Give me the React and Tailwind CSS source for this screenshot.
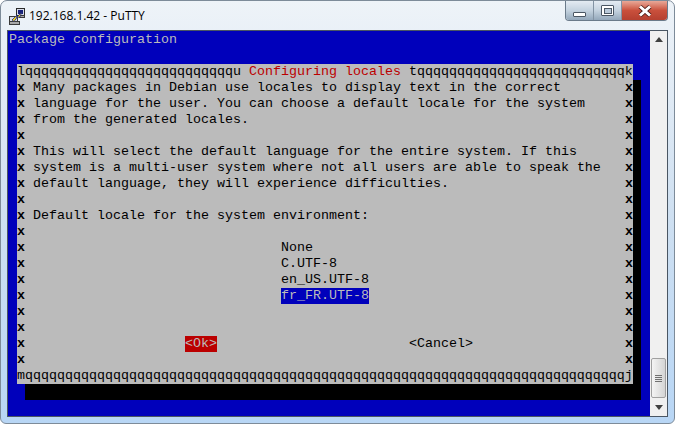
// App.jsx
// PuTTY window (Windows 7 frame) showing the Debian "Configuring locales" dialog.

const mono = "font-['Liberation_Mono','Courier_New',monospace] text-[13.33px] leading-[16px] whitespace-pre";

const bodyRows = [
  'Many packages in Debian use locales to display text in the correct',
  'language for the user. You can choose a default locale for the system',
  'from the generated locales.',
  '',
  'This will select the default language for the entire system. If this',
  'system is a multi-user system where not all users are able to speak the',
  'default language, they will experience difficulties.',
  '',
  'Default locale for the system environment:',
  '',
];

const locales = ['None', 'C.UTF-8', 'en_US.UTF-8', 'fr_FR.UTF-8'];

// one dialog line: the x border, the content, the x border
function Row({ children }) {
  return (
    <div className="flex h-4 w-[616px] justify-between">
      <div className="flex">
        <span className="w-4 font-bold">x</span>
        {children}
      </div>
      <span className="font-bold">x</span>
    </div>
  );
}

function PuttyIcon() {
  return (
    <svg width="17" height="17" viewBox="0 0 17 17" className="shrink-0">
      {/* lower computer */}
      <rect x="0.5" y="8.5" width="8" height="5" fill="#d8dce8" stroke="#3a3a3a" />
      <rect x="0.5" y="13.5" width="10" height="3" fill="#a8a8a8" stroke="#3a3a3a" />
      {/* upper computer */}
      <rect x="7.5" y="0.5" width="8" height="7" fill="#d8dce8" stroke="#2a2a2a" />
      <rect x="9" y="2" width="5" height="4" fill="#16207a" />
      <rect x="10.5" y="7.5" width="5" height="2" fill="#a8a8a8" stroke="#3a3a3a" />
      {/* lightning between them */}
      <path d="M3 12 L8 7 L7.5 9.5 L12.5 4.5 L11 9 L8 9.5 L5 13.5 Z" fill="#f7d81e" stroke="#1c2a80" strokeWidth="0.8" />
    </svg>
  );
}

function WindowButtons() {
  return (
    <div className="mr-[6px] flex h-[20px] w-[103px] overflow-hidden rounded-b-[4px] border border-t-0 border-[#6a7a8a]">
      <div className="flex w-[28px] items-end justify-center border-r border-[#8393a3] bg-gradient-to-b from-[#e4ebf2] via-[#c4d2df] to-[#94a8bb] pb-[3px]">
        <div className="h-[5px] w-[13px] rounded-[1px] border border-[#4a5663] bg-white" />
      </div>
      <div className="flex w-[28px] items-center justify-center border-r border-[#8393a3] bg-gradient-to-b from-[#e4ebf2] via-[#c4d2df] to-[#94a8bb]">
        <div className="flex h-[11px] w-[13px] items-center justify-center rounded-[1px] border border-[#4a5663] bg-white">
          <div className="h-[6px] w-[8px] border border-[#4a5663] bg-[#b9c9d9]" />
        </div>
      </div>
      <div className="flex flex-1 items-center justify-center bg-gradient-to-b from-[#e8a898] via-[#c9503c] to-[#b54030]">
        <svg width="16" height="12" viewBox="0 0 16 12">
          <path d="M3 1.5 L13 10.5 M13 1.5 L3 10.5" stroke="#4a1a14" strokeWidth="4.4" />
          <path d="M3 1.5 L13 10.5 M13 1.5 L3 10.5" stroke="#ffffff" strokeWidth="3" />
        </svg>
      </div>
    </div>
  );
}

function Scrollbar() {
  return (
    <div className="flex w-[17px] shrink-0 flex-col items-center bg-[#f0f0f0]">
      <div className="flex h-[17px] w-full items-center justify-center">
        <svg width="8" height="5" viewBox="0 0 8 5"><path d="M4 0 L8 5 H0 Z" fill="#404040" /></svg>
      </div>
      <div className="flex-1" />
      <div className="flex h-[40px] w-[15px] flex-col items-center justify-center gap-[1px] rounded-[2px] border border-[#a0a0a0] bg-gradient-to-r from-[#f4f4f4] to-[#d4d4d4]">
        <div className="h-px w-[7px] bg-[#707070]" />
        <div className="h-px w-[7px] bg-[#707070]" />
        <div className="h-px w-[7px] bg-[#707070]" />
        <div className="h-px w-[7px] bg-[#707070]" />
      </div>
      <div className="flex h-[18px] w-full items-center justify-center">
        <svg width="8" height="5" viewBox="0 0 8 5"><path d="M0 0 H8 L4 5 Z" fill="#404040" /></svg>
      </div>
    </div>
  );
}

function Dialog() {
  return (
    <div className="ml-2 w-[616px] bg-[#bbbbbb] text-[#000000] shadow-[8px_16px_0_#000000]">
      {/* ---- top border with the title ---- */}
      <div className="flex h-4">
        <span>{'l' + 'q'.repeat(26) + 'u '}</span>
        <span className="text-[#bb0000]">Configuring locales</span>
        <span>{' t' + 'q'.repeat(26) + 'k'}</span>
      </div>

      {bodyRows.map((text, i) => (
        <Row key={i}>
          <span>{text}</span>
        </Row>
      ))}

      {/* ---- locale list ---- */}
      {locales.map((name) => (
        <Row key={name}>
          <span
            className={
              name === 'fr_FR.UTF-8'
                ? 'ml-[248px] bg-[#0000bb] text-[#bbbbbb]'
                : 'ml-[248px]'
            }
          >
            {name}
          </span>
        </Row>
      ))}

      <Row />
      <Row />

      {/* ---- buttons ---- */}
      <Row>
        <span className="ml-[152px] bg-[#bb0000] text-[#bbbbbb]">{'<Ok>'}</span>
        <span className="ml-[192px]">{'<Cancel>'}</span>
      </Row>

      <Row />

      <div className="h-4">{'m' + 'q'.repeat(75) + 'j'}</div>
    </div>
  );
}

export default function App() {
  return (
    <div className="h-[424px] w-[675px] overflow-hidden bg-white">
      <div className="flex h-[424px] flex-col rounded-t-[7px] rounded-b-[6px] border border-[#7d8b99] bg-gradient-to-b from-[#eef3f8] via-[#cfe0f1] to-[#b8d6f5] px-[6px] pb-[6px]">

        {/* ---- title bar ---- */}
        <div className="flex h-[29px] shrink-0 items-start justify-between">
          <div className="mt-[6px] flex items-center gap-[3px] pl-[2px]">
            <PuttyIcon />
            <span className="font-['Open_Sans',sans-serif] text-[12px] leading-[18px] text-[#000000]">
              192.168.1.42 - PuTTY
            </span>
          </div>
          <div className="-mr-[6px]">
            <WindowButtons />
          </div>
        </div>

        {/* ---- terminal and scrollbar ---- */}
        <div className="flex min-h-0 flex-1 border border-[#4a5663]">
          <div className={`${mono} flex-1 bg-[#0000bb] pt-px text-[#bbbbbb]`}>
            <div className="h-4 pl-px">Package configuration</div>
            <div className="h-4" />
            <div className="pl-px">
              <Dialog />
            </div>
          </div>
          <Scrollbar />
        </div>
      </div>
    </div>
  );
}
